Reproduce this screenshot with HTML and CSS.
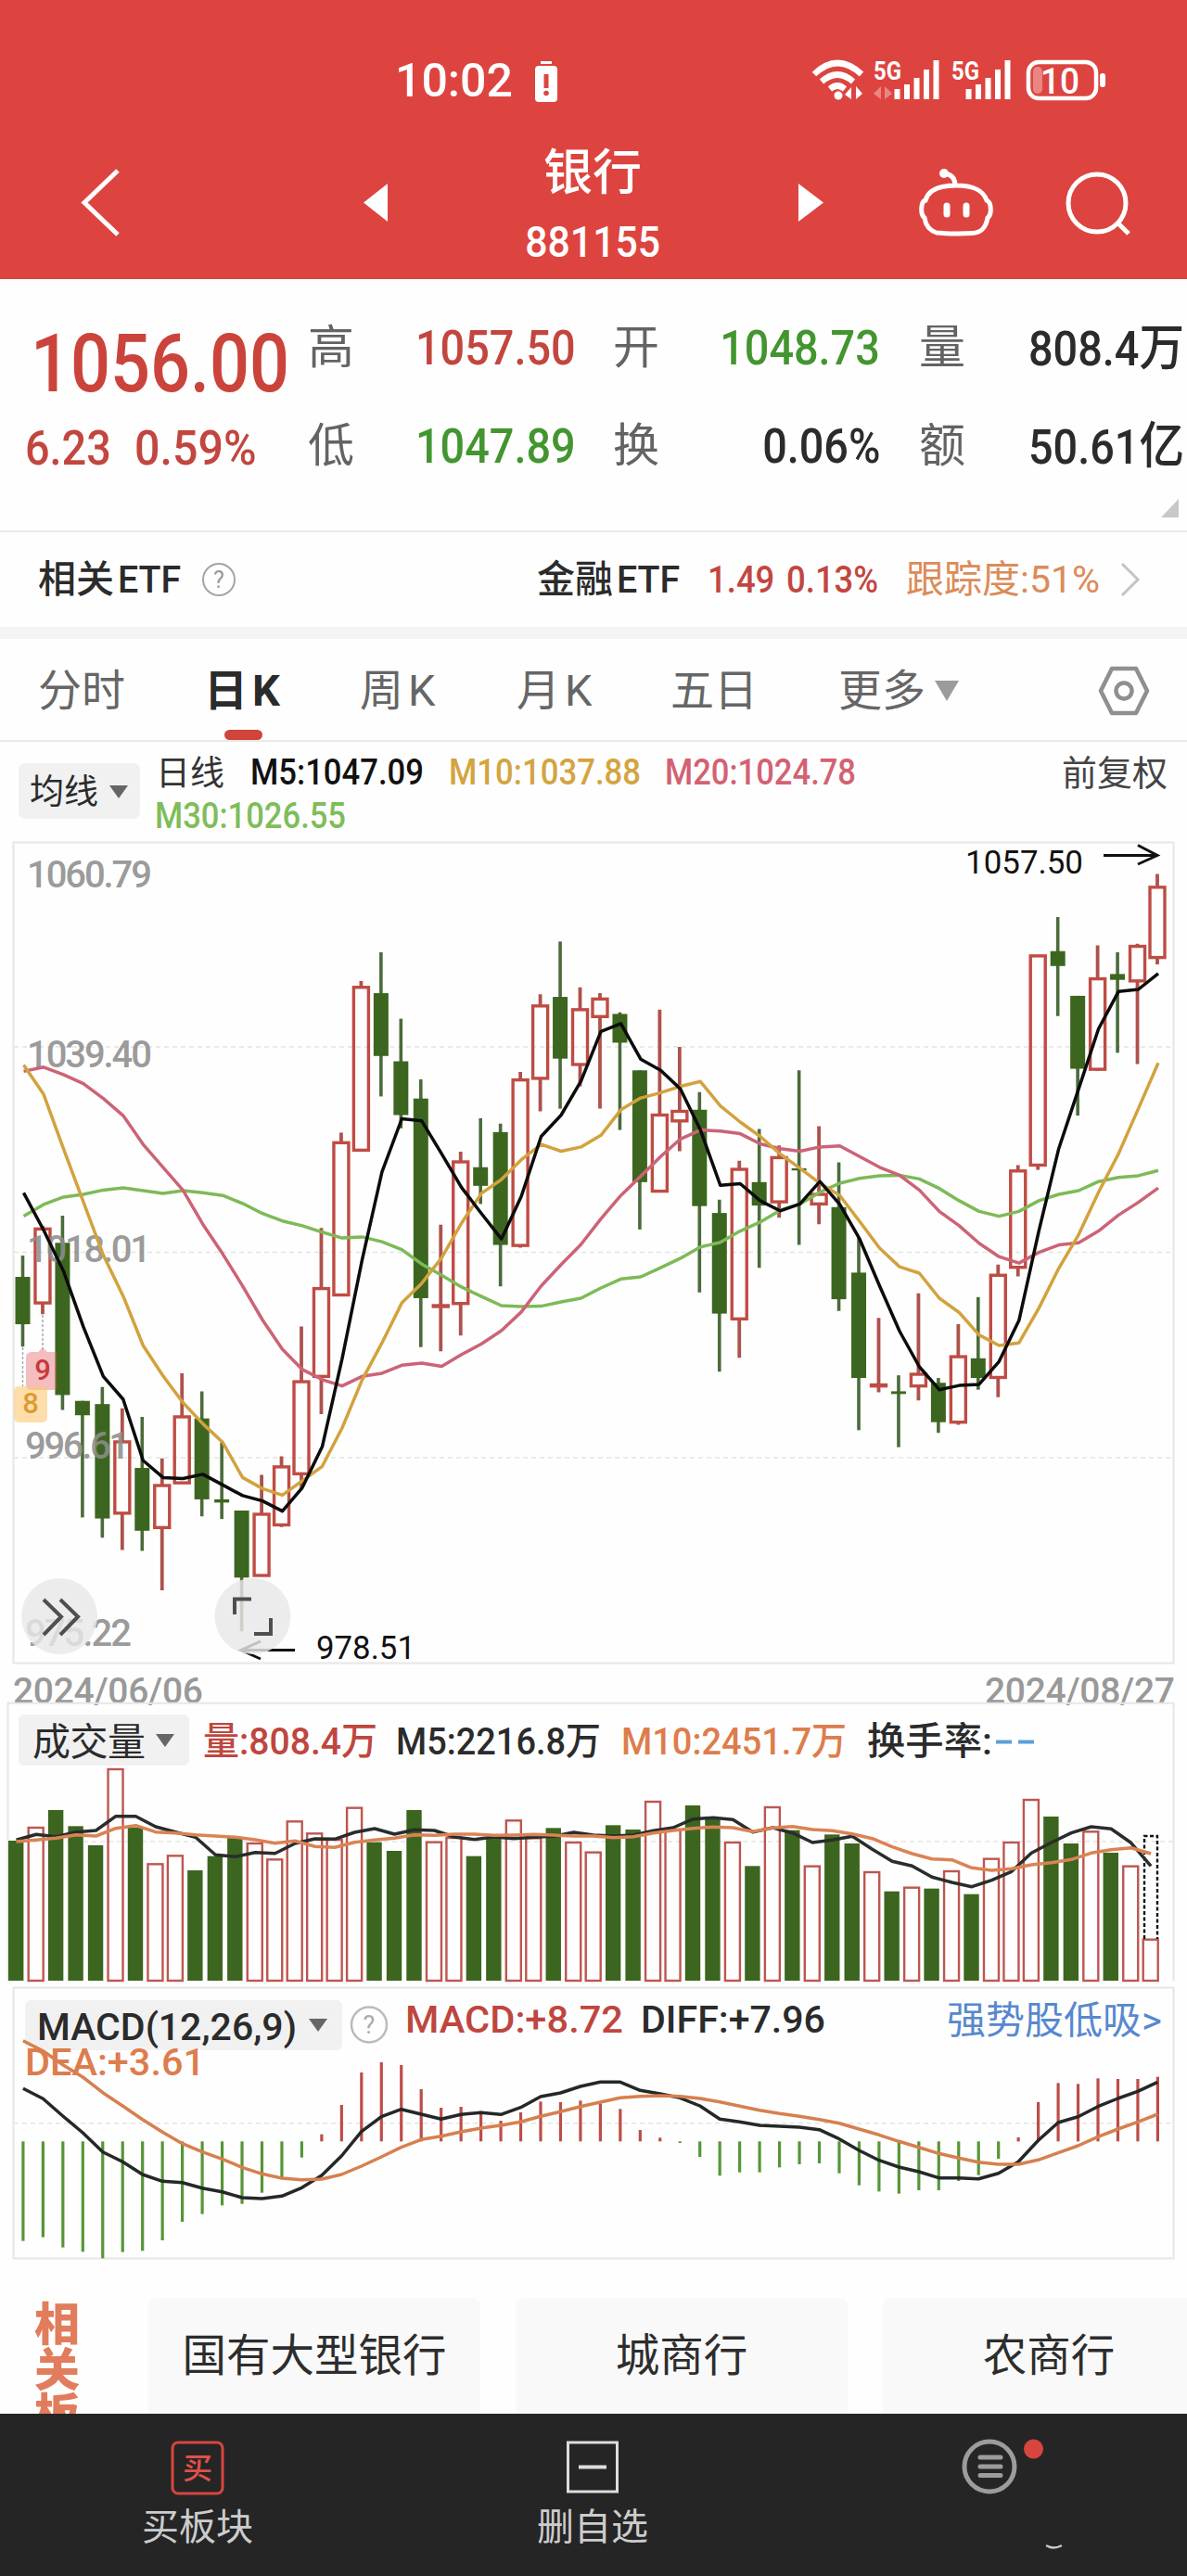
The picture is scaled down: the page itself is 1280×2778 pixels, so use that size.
FILE: index.html
```html
<!DOCTYPE html>
<html lang="zh-CN">
<head>
<meta charset="utf-8">
<title>银行 881155</title>
<link rel="stylesheet" href="styles.css">
</head>
<body>
<header class="header">
  <div class="status">
    <span class="clock">10:02</span>
    <svg class="low" viewBox="0 0 26 44" width="26" height="44"><rect x="7" y="0" width="12" height="3" fill="#fff"/><rect x="1" y="5" width="24" height="39" rx="4" fill="#fff"/><path d="M13 14v15" stroke="#dd4440" stroke-width="5"/><circle cx="13" cy="34.500" r="2.800" fill="#dd4440"/></svg>
    <svg class="radios" viewBox="870 60 330 54" width="330" height="54" fill="none" stroke="#fff">
      <path d="M878 80Q903 56 929 80M886 88Q903 73 920 88M895 96Q903 89 911 96" stroke-width="6.500"/>
      <circle cx="904" cy="103" r="4.500" fill="#fff" stroke="none"/>
      <path d="M911 102l7-8v13zM930 101l-7-8v14z" fill="#fff" stroke="none"/>
      <g class="net"><text x="942" y="86" textLength="30" lengthAdjust="spacingAndGlyphs">5G</text><text x="1026" y="86" textLength="30" lengthAdjust="spacingAndGlyphs">5G</text></g>
      <path d="M942 101l8-8v14zM962 101l-8-8v14z" fill="#ea8682" stroke="none"/>
      <path d="M967.500 107V96M978 107V91M988.500 107V84M999 107V75M1009.500 107V65M1044.500 107V96M1055 107V91M1065.500 107V84M1076 107V75M1086.500 107V65" stroke-width="6"/>
      <rect x="1109" y="67" width="73" height="39" rx="11" stroke-width="4.500"/>
      <rect x="1114" y="72" width="10" height="29" rx="5" fill="#ea8682" stroke="none"/>
      <rect x="1186" y="79" width="6" height="15" rx="3" fill="#fff" stroke="none"/>
      <text class="pct" x="1122" y="101" textLength="42" lengthAdjust="spacingAndGlyphs">10</text>
    </svg>
  </div>
  <div class="titlebar">
    <svg viewBox="80 175 60 84" width="60" height="84"><path d="M127 182L91 216.500L127 251" fill="none" stroke="#fff" stroke-width="5"/></svg>
    <svg viewBox="0 0 26 41" width="26" height="41"><path d="M26 0V41L0 20.500z" fill="#fff"/></svg>
    <div class="title"><h1>银行</h1><span class="code">881155</span></div>
    <svg viewBox="0 0 27 41" width="27" height="41"><path d="M0 0V41L27 20.500z" fill="#fff"/></svg>
    <svg viewBox="985 178 90 80" width="90" height="80" fill="none" stroke="#fff" stroke-width="5"><path d="M1019 186Q1030 188 1030 199M1010 250C1001 247 998 241 997 234C992 230 993 216 998 215C1001 204 1012 199 1031 199S1060 204 1064 215C1069 217 1070 230 1065 234C1063 245 1058 250 1048 250.500Q1030 251.500 1010 250z"/><circle cx="1018" cy="186" r="5" fill="#fff" stroke="none"/><path d="M1021 221v9M1042 221v9" stroke-width="7" stroke-linecap="round"/></svg>
    <svg viewBox="1145 178 80 80" width="80" height="80" fill="none" stroke="#fff" stroke-width="5"><circle cx="1183" cy="218" r="31"/><path d="M1204 238L1217 251"/></svg>
  </div>
</header>

<section class="quote">
  <div class="price up"><span class="num big">1056.00</span></div>
  <span class="lab">高</span><span class="num up">1057.50</span><span class="lab">开</span><span class="num end down">1048.73</span><span class="lab">量</span><span class="num">808.4<i>万</i></span>
  <div class="change up"><span class="num">6.23</span><span class="num wide">0.59%</span></div>
  <span class="lab">低</span><span class="num down">1047.89</span><span class="lab">换</span><span class="num end">0.06%</span><span class="lab">额</span><span class="num">50.61<i>亿</i></span>
  <svg class="corner" viewBox="0 0 19 20" width="19" height="20"><path d="M19 0V20H0z" fill="#c8c8c8"/></svg>
</section>

<section class="etf">
  <span class="name">相关<b>ETF</b></span>
  <svg viewBox="0 0 38 38" width="38" height="38"><circle cx="19" cy="19" r="17" fill="none" stroke="#a5a5a5" stroke-width="2"/><text x="19" y="28" text-anchor="middle" font-size="25" fill="#999">?</text></svg>
  <span class="name">金融<b>ETF</b></span>
  <span class="num rate up">1.49</span>
  <span class="num rate up">0.13%</span>
  <span class="track">跟踪度<span>:51%</span></span>
  <svg viewBox="0 0 22 36" width="22" height="36"><path d="M2 1L19 18L2 35" fill="none" stroke="#c4c4c4" stroke-width="3"/></svg>
</section>

<nav class="tabs">
  <span>分时</span><span class="on">日<em>K</em></span><span>周<em>K</em></span><span>月<em>K</em></span><span>五日</span><span>更多</span>
  <svg viewBox="0 0 26 22" width="26" height="22"><path d="M0 0H26L13 22z" fill="#9b9b9b"/></svg>
  <svg viewBox="0 0 56 54" width="56" height="54" fill="none" stroke="#8f8f8f" stroke-width="4.500"><path d="M15 3H41L53 27L41 51H15L3 27z" stroke-linejoin="round"/><circle cx="28" cy="27" r="8.500"/></svg>
</nav>

<section class="legend">
  <span class="pick">均线<svg viewBox="0 0 20 14" width="20" height="14"><path d="M0 0H20L10 14z" fill="#666"/></svg></span>
  <svg class="mas" viewBox="165 807 1100 96" width="1100" height="96">
    <g class="s38">
    <text x="168" y="847" textLength="74" fill="#333">日线</text>
    <text x="270" y="846" textLength="187" lengthAdjust="spacingAndGlyphs" fill="#111">M5:1047.09</text>
    <text x="484" y="846" textLength="207" lengthAdjust="spacingAndGlyphs" fill="#d4a43f">M10:1037.88</text>
    <text x="717" y="846" textLength="206" lengthAdjust="spacingAndGlyphs" fill="#d36173">M20:1024.78</text>
    <text x="167" y="893" textLength="206" lengthAdjust="spacingAndGlyphs" fill="#7fbd5a">M30:1026.55</text>
    <text x="1145" y="847" textLength="114" lengthAdjust="spacingAndGlyphs" fill="#444" font-weight="400">前复权</text>
    </g>
  </svg>
</section>

<svg class="chart" viewBox="0 903 1280 933" width="1280" height="933">
  <rect x="14.500" y="908.500" width="1251" height="885" class="frame"/>
  <path class="grid" d="M15 1129H1265M15 1350.500H1265M15 1572H1265"/>
  <g id="candles"></g>
  <g class="axis">
    <text x="29" y="957" textLength="135">1060.79</text>
    <text x="29" y="1151" textLength="135">1039.40</text>
    <text x="29" y="1361" textLength="134">1018.01</text>
    <text x="27" y="1573" textLength="113">996.61</text>
    <text x="27" y="1775" textLength="115">975.22</text>
  </g>
  <path d="M24.500 1453V1495M46 1418V1455" stroke="#aaa" stroke-width="1.500" stroke-dasharray="3 2"/>
  <path d="M34 1458h7l5-5 5 5h10v41H34q-6 0-6-6v-29q0-6 6-6z" fill="#e55c61" fill-opacity=".4"/>
  <rect x="15" y="1495" width="36" height="39" rx="5" fill="#fbc873" fill-opacity=".6"/>
  <text x="46" y="1488" class="mark" fill="#c8393c">9</text>
  <text x="33" y="1524" class="mark" fill="#dd9a35">8</text>
  <g id="averages"></g>
  <circle cx="64" cy="1743" r="41" class="knob"/>
  <path d="M47 1725L66 1743.500L47 1763M65 1725L84 1743.500L65 1763" class="glyph"/>
  <g class="peak">
    <text x="1041" y="942" textLength="127" lengthAdjust="spacingAndGlyphs">1057.50</text>
    <text x="341" y="1789" textLength="107" lengthAdjust="spacingAndGlyphs">978.51</text>
  </g>
  <path d="M1190 922.500H1247M1227 911.500L1248 922.500L1227 932M318 1779.500H261M281 1770L260 1779.500L281 1789" fill="none" stroke="#111" stroke-width="3"/>
  <circle cx="272.500" cy="1743" r="41" class="knob"/>
  <path d="M253 1741V1724.500H271M274 1762H292V1745" class="glyph"/>
  <g class="dates">
    <text x="14" y="1837" textLength="205">2024/06/06</text>
    <text x="1062" y="1837" textLength="205">2024/08/27</text>
  </g>
</svg>

<svg class="chart" viewBox="0 1836 1280 305" width="1280" height="305">
  <path d="M8.500 2136V1836.700H1265.500V2136" class="frame"/>
  <path class="grid" d="M9 1986H1265"/>
  <rect x="20" y="1849" width="184" height="55" rx="6" fill="#f1f1f1"/>
  <path d="M168 1870H188L178 1884z" fill="#666"/>
  <g class="s41">
    <text x="35" y="1893" textLength="122" fill="#2b2b2b" font-weight="400">成交量</text>
    <text x="219" y="1892" textLength="188" lengthAdjust="spacingAndGlyphs" fill="#bf463f">量:808.4万</text>
    <text x="427" y="1892" textLength="221" lengthAdjust="spacingAndGlyphs" fill="#2b2b2b">M5:2216.8万</text>
    <text x="670" y="1892" textLength="243" lengthAdjust="spacingAndGlyphs" fill="#dd7d4d">M10:2451.7万</text>
    <text x="935" y="1892" textLength="135" lengthAdjust="spacingAndGlyphs" fill="#2b2b2b">换手率:</text>
  </g>
  <path d="M1074 1878.500H1091M1098 1878.500H1115" stroke="#5f9fd8" stroke-width="4"/>
  <g id="volume"></g>
</svg>

<svg class="chart" viewBox="0 2141 1280 297" width="1280" height="297">
  <rect x="14.500" y="2143.500" width="1251" height="292" class="frame"/>
  <path class="grid" d="M15 2289.700H1265"/>
  <rect x="27" y="2157" width="342" height="54" rx="6" fill="#f1f1f1"/>
  <path d="M333 2177H353L343 2191z" fill="#666"/>
  <circle cx="398" cy="2183.500" r="19" fill="none" stroke="#bbb" stroke-width="2.500"/>
  <text x="398" y="2193" text-anchor="middle" font-size="27" fill="#aaa">?</text>
  <g class="s41">
    <text x="40" y="2200" textLength="280" lengthAdjust="spacingAndGlyphs" fill="#2b2b2b">MACD(12,26,9)</text>
    <text x="437" y="2192" textLength="235" lengthAdjust="spacingAndGlyphs" fill="#bf463f">MACD:+8.72</text>
    <text x="691" y="2192" textLength="199" lengthAdjust="spacingAndGlyphs" fill="#2b2b2b">DIFF:+7.96</text>
    <text x="27" y="2238" textLength="194" lengthAdjust="spacingAndGlyphs" fill="#dd7d4d">DEA:+3.61</text>
    <text x="1021" y="2193" textLength="232" lengthAdjust="spacingAndGlyphs" fill="#5788cf" font-weight="400">强势股低吸&gt;</text>
  </g>
  <g id="macd"></g>
</svg>

<section class="related">
  <div class="side">相关板</div>
  <div class="card">国有大型银行</div>
  <div class="card">城商行</div>
  <div class="card">农商行</div>
</section>

<footer class="bottom">
  <div class="item"><svg viewBox="0 0 58 60" width="58" height="60"><rect x="2" y="2" width="54" height="55" rx="6" fill="none" stroke="#d8453f" stroke-width="3"/><text x="29" y="41" text-anchor="middle" font-size="32" font-weight="500" fill="#e0504a">买</text></svg><span>买板块</span></div>
  <div class="item"><svg viewBox="0 0 58 60" width="58" height="60"><rect x="2.500" y="2" width="53" height="53" fill="none" stroke="#ddd" stroke-width="3"/><path d="M14 28.500H44" stroke="#ddd" stroke-width="4"/></svg><span>删自选</span></div>
  <div class="item more"><svg viewBox="0 0 90 60" width="90" height="60"><circle cx="30" cy="30" r="27" fill="none" stroke="#9c9c9c" stroke-width="5"/><path d="M20 20H42M20 30H42M20 39.500H42" stroke="#9c9c9c" stroke-width="5" stroke-linecap="round"/><circle cx="77.500" cy="11" r="10.500" fill="#d8453f"/><path d="M92 115.500Q99 119.500 107 115.500" fill="none" stroke="#ccc" stroke-width="2.500" stroke-linecap="round"/></svg></div>
</footer>
<script src="charts.js"></script>
</body>
</html>
```
FILE: styles.css
```css
* { box-sizing: border-box; }
body { margin: 0; width: 1280px; height: 2778px; overflow: hidden; background: #fefefe; color: #2b2b2b; font-family: Roboto, "Noto Sans CJK SC", sans-serif; line-height: 1; }
svg { display: block; flex: none; }
text { font-family: Roboto, "Noto Sans CJK SC", sans-serif; }
i, em, b { font-style: normal; font-weight: inherit; }
.up { color: #c2463f; }
.down { color: #43952f; }

.header { height: 301px; background: #dd4440; color: #fff; }
.status { height: 130px; padding: 60px 0 0 426px; display: flex; align-items: flex-start; }
.clock { width: 150px; padding-top: 2px; font-size: 50px; font-weight: 500; white-space: nowrap; }
.low { margin-top: 6px; }
.radios { margin-left: 268px; }
.net text { font-size: 27px; font-weight: 700; fill: #fff; stroke: none; }
.pct { font-size: 39px; font-weight: 500; fill: #fff; stroke: none; }
.titlebar { height: 171px; padding: 8px 0 0 80px; display: grid; grid-template-columns: 312px 94px 375px 124px 160px 80px; align-items: center; }
.titlebar > svg { margin-top: -2px; }
.title { width: 256px; margin-left: 25px; padding-top: 7px; display: flex; flex-direction: column; align-items: center; }
.title h1 { margin: -1px 0 23px; font-size: 53px; font-weight: 500; }
.code { font-size: 47px; font-weight: 500; transform: scaleX(.91); }

.quote { height: 273px; padding: 22px 0 0 29px; border-bottom: 2px solid #eaeaea; display: grid; grid-template-columns: 303px 116px 213px 116px 214px 118px 1fr; grid-template-rows: 106px 106px; align-items: center; position: relative; }
.num { display: inline-block; font-size: 52px; font-weight: 500; white-space: nowrap; transform: scaleX(.9); transform-origin: left; }
.num i { font-size: 54px; }
.end { justify-self: end; margin-right: 42px; transform-origin: right; }
.wide { transform: scaleX(.93); }
.lab { padding-bottom: 2px; font-size: 50px; color: #636363; white-space: nowrap; }
.price { padding: 32px 0 0 4px; }
.big { font-size: 87px; color: #cb443b; transform: scaleX(.87); }
.change { display: grid; grid-template-columns: 118px 1fr; padding: 4px 0 0; margin-left: -2px; }
.corner { position: absolute; left: 1252px; top: 237px; }

.etf { height: 115px; border-bottom: 13px solid #f4f4f4; padding-left: 41px; display: grid; grid-template-columns: 176px 362px 184px 85px 129px 231px 22px; align-items: center; white-space: nowrap; }
.name { font-size: 41px; font-weight: 500; }
.name b { display: inline-block; font-size: 41px; margin-left: 4px; transform: scaleX(.96); transform-origin: left; }
.rate { font-size: 41px; transform: scaleX(.89); }
.track { color: #dc8b58; font-size: 41px; }
.track span { display: inline-block; }

.tabs { height: 111px; padding-top: 2px; border-bottom: 2px solid #e9e9e9; padding-left: 41px; display: grid; grid-template-columns: 179px 168px 169px 166px 181px 104px 176px 56px; align-items: center; font-size: 47px; color: #666; white-space: nowrap; }
.tabs em { display: inline-block; margin-left: 5px; }
.on { color: #2b2b2b; font-weight: 700; position: relative; }
.on::after { content: ""; position: absolute; left: 22px; top: 66px; width: 41px; height: 11px; border-radius: 6px; background: #d0443a; }

.legend { height: 103px; padding: 7px 0 0 20px; display: flex; gap: 14px; }
.pick { width: 131px; height: 60px; margin-top: 16px; padding: 2px 0 0 12px; border-radius: 7px; background: #f1f1f1; font-size: 37px; display: flex; align-items: center; gap: 12px; }
.s38 { font-size: 38px; font-weight: 500; }
.s41 { font-size: 41px; font-weight: 500; }
.s38 text:first-child { font-size: 37px; font-weight: 400; }

.chart { overflow: visible; }
.frame { fill: none; stroke: #e6e6e6; stroke-width: 2; }
.grid { fill: none; stroke: #e4e4e4; stroke-width: 1.500; stroke-dasharray: 5 4; }
.axis text { font-size: 40px; font-weight: 500; fill: #8d8d8d; fill-opacity: .9; }
.mark { font-size: 31px; font-weight: 500; text-anchor: middle; }
.peak text { font-size: 35px; fill: #111; }
.dates text { font-size: 39px; font-weight: 500; fill: #999; }
.knob { fill: #e8e8e8; fill-opacity: .82; }
.glyph { fill: none; stroke: #4f4f4f; stroke-width: 4; }
.line { fill: none; stroke-width: 3.500; stroke-linejoin: round; }

.related { height: 165px; padding-top: 40px; display: flex; overflow: hidden; background: #fefefe; }
.side { width: 49px; margin: 5px 74px 0 37px; font-size: 49px; font-weight: 900; line-height: 49px; color: #e17d5c; word-break: break-all; }
.card { flex: none; width: 358px; height: 150px; margin-right: 38px; border-radius: 8px 8px 0 0; background: #f9f9f9; font-size: 47.500px; text-align: center; line-height: 127px; color: #2d2d2d; }
.card:last-child { margin: 0; }

.bottom { height: 175px; background: #252525; color: #ccc; display: grid; grid-template-columns: 426px 426px 428px; font-size: 40px; }
.item { padding-top: 29px; display: flex; flex-direction: column; align-items: center; gap: 14px; }
.more { padding-left: 31px; padding-top: 27px; }
.more svg { overflow: visible; }
```
FILE: charts.js
```js
const NS = 'http://www.w3.org/2000/svg';
const STEP = 21.465;
const GREEN = '#3c661f';
const RED = '#bf4c44';

function add(parent, tag, attrs) {
  const node = document.createElementNS(NS, tag);
  for (const key in attrs) node.setAttribute(key, attrs[key]);
  document.getElementById(parent).appendChild(node);
}
function line(parent, values, x0, scale, color) {
  const points = values.map((v, i) => (x0 + i * STEP).toFixed(1) + ',' + scale(v).toFixed(1)).join(' ');
  add(parent, 'polyline', { points, class: 'line', stroke: color });
}

// direction, body top, body bottom, high, low
const candles = [
  'g 831 920 791 962', 'r 741 880 735 901', 'g 767 1053 716 1081', 'g 1064 1091 1064 1283', 'g 1070 1285 1038 1321',
  'r 1141 1275 1078 1344', 'g 1190 1308 1094 1346', 'r 1223 1302 1172 1420', 'r 1094 1218 1012 1218', 'g 1097 1249 1046 1281',
  'g 1249 1255 1142 1286', 'g 1270 1396 1270 1497', 'r 1277 1392 1203 1392', 'r 1188 1297 1168 1301', 'r 1028 1201 924 1230',
  'r 853 1018 739 1089', 'r 579 865 560 865', 'r 287 593 275 593', 'g 298 416 221 492', 'g 426 527 346 552',
  'g 496 871 460 963', 'r 885 886 733 971', 'r 615 881 596 941', 'g 625 660 533 694', 'g 559 771 543 849',
  'r 461 772 446 776', 'r 322 458 300 520', 'g 305 421 201 515', 'r 329 432 287 473', 'r 309 342 298 515',
  'g 337 391 334 555', 'g 443 653 443 742', 'r 527 670 329 670', 'r 520 538 399 595', 'g 517 698 484 860',
  'g 711 900 686 1009', 'r 629 910 613 983', 'g 653 697 553 814', 'r 607 690 584 720', 'g 627 631 443 771',
  'r 676 694 548 732', 'g 700 873 616 895', 'g 823 1021 757 1119', 'r 1034 1036 908 1048', 'g 1046 1051 1016 1151',
  'r 1014 1036 862 1063', 'g 1030 1104 1021 1124', 'r 981 1104 920 1109', 'g 984 1021 869 1043', 'r 828 1020 808 1057',
  'r 632 813 621 830', 'r 228 621 228 630', 'g 219 247 155 341', 'g 303 440 303 528', 'r 271 441 208 444',
  'g 262 273 221 410', 'r 210 275 205 431', 'r 99 231 74 244'
];
const py = v => 900 + v * 0.574;
candles.forEach((row, i) => {
  const [dir, ...vals] = row.split(' ');
  const [top, bottom, high, low] = vals.map(v => py(+v));
  const x = 24.5 + i * STEP;
  if (dir === 'g') {
    add('candles', 'path', { d: `M${x} ${high}V${low}`, stroke: '#4b6b3b', 'stroke-width': 3.6 });
    add('candles', 'rect', { x: x - 8, y: top, width: 16, height: bottom - top, fill: GREEN });
  } else {
    add('candles', 'path', { d: `M${x} ${high}V${top}M${x} ${bottom}V${low}`, stroke: '#ad524d', 'stroke-width': 3.8 });
    add('candles', 'rect', { x: x - 8, y: top, width: 16, height: Math.max(bottom - top, 1), fill: 'none', stroke: RED, 'stroke-width': 3.4 });
  }
});

line('averages', [717,695,681,676,668,664,669,674,669,673,678,693,712,726,735,747,758,756,765,780,807,828,850,868,885,887,886,878,871,852,835,831,814,796,775,766,745,728,706,694,672,655,646,641,640,647,665,688,708,717,708,688,676,669,652,644,641,631], 25.5, py, '#7dba57');
line('averages', [445,437,451,468,496,528,582,625,668,732,788,848,912,967,1005,1024,1036,1018,1012,997,993,999,977,957,932,897,848,808,770,722,678,642,605,572,555,557,562,581,590,595,587,585,605,625,640,668,708,735,768,793,805,785,771,767,745,715,691,664], 25.5, py, '#cc6376');
line('averages', [433,488,590,690,790,867,960,1017,1067,1107,1142,1208,1229,1241,1214,1187,1115,1025,955,880,843,795,730,674,648,611,582,595,587,565,517,495,485,473,464,510,540,567,600,627,655,678,727,777,812,824,871,898,940,960,955,890,815,752,672,600,515,429], 25.5, py, '#d2a23e');
line('averages', [673,743,820,925,1018,1061,1176,1208,1210,1202,1222,1242,1252,1271,1227,1150,985,800,634,534,538,600,663,712,760,680,567,527,463,370,355,422,443,478,555,659,656,688,707,694,652,695,760,848,933,1000,1043,1035,1033,990,913,745,590,478,365,295,291,261], 25.5, py, '#0c0c0c');

const volumes = 'g615 r573 g516 g568 g630 r384 g573 r691 r664 g711 g665 g605 r624 r676 r553 r592 r612 r509 g620 g648 g516 r620 r606 g665 g604 r550 r607 g574 r621 r653 g565 g579 r489 r579 g501 g543 r621 g697 r507 g581 r698 g595 g624 r717 g779 r767 g770 r714 g788 r674 r621 r483 g537 g624 r586 g654 r698 r935'.split(' ');
const vy = v => 1780 + v / 3;
volumes.forEach((item, i) => {
  const x = 17.2 + i * STEP;
  const y = vy(+item.slice(1));
  if (item[0] === 'g') add('volume', 'rect', { x: x - 8.2, y, width: 16.4, height: 2136 - y, fill: GREEN });
  else add('volume', 'rect', { x: x - 8, y, width: 16, height: 2136 - y, fill: 'none', stroke: '#bd5650', 'stroke-width': 2.4 });
});
add('volume', 'path', { d: 'M1234 2091V1980H1248V2091', fill: 'none', stroke: '#111', 'stroke-width': 2.4, 'stroke-dasharray': '4 2.500' });
line('volume', [613,595,602,587,582,536,536,570,587,604,661,667,653,656,624,609,610,588,576,594,580,582,603,611,603,608,604,601,588,597,600,597,583,573,545,541,547,587,573,590,621,613,601,643,682,697,733,750,764,743,715,655,621,590,570,577,622,697], 17.6, vy, '#292d2b');
line('volume', [618,613,607,596,600,575,566,587,590,596,600,604,612,623,616,634,637,620,613,607,596,598,594,594,598,597,595,597,600,600,605,602,590,582,575,571,573,586,574,569,579,583,593,608,635,657,674,677,703,711,706,693,686,676,655,644,638,657], 17.6, vy, '#da8354');

const my = v => 2130 + v / 3;
[860,848,881,895,916,896,892,858,798,773,745,740,704,655,590,515,420,315,282,291,369,429,426,440,471,444,409,411,406,415,433,501,526,543,588,649,638,638,622,612,609,641,680,700,707,696,696,666,647,594,525,411,349,352,334,336,336,329].forEach((v, i) => {
  const x = 24.9 + i * STEP;
  add('macd', 'path', { d: `M${x} ${my(538)}V${my(v)}`, stroke: v > 538 ? '#559638' : '#bd4d47', 'stroke-width': 3.2 });
});
line('macd', [367,400,456,510,572,604,645,667,671,689,701,720,723,715,688,648,585,506,458,434,450,466,451,445,451,428,393,381,360,346,346,373,384,397,423,466,475,486,489,492,500,530,567,599,621,636,656,656,659,641,604,535,477,458,425,399,376,346], 24.9, my, '#242827');
line('macd', [212,245,290,330,380,423,467,508,545,572,595,622,643,657,662,660,645,618,588,557,532,521,507,495,486,475,457,442,425,411,397,392,390,392,399,410,424,437,448,457,467,479,498,517,538,557,577,592,605,612,612,598,575,552,523,498,475,450], 24.9, my, '#d6804f');
```
